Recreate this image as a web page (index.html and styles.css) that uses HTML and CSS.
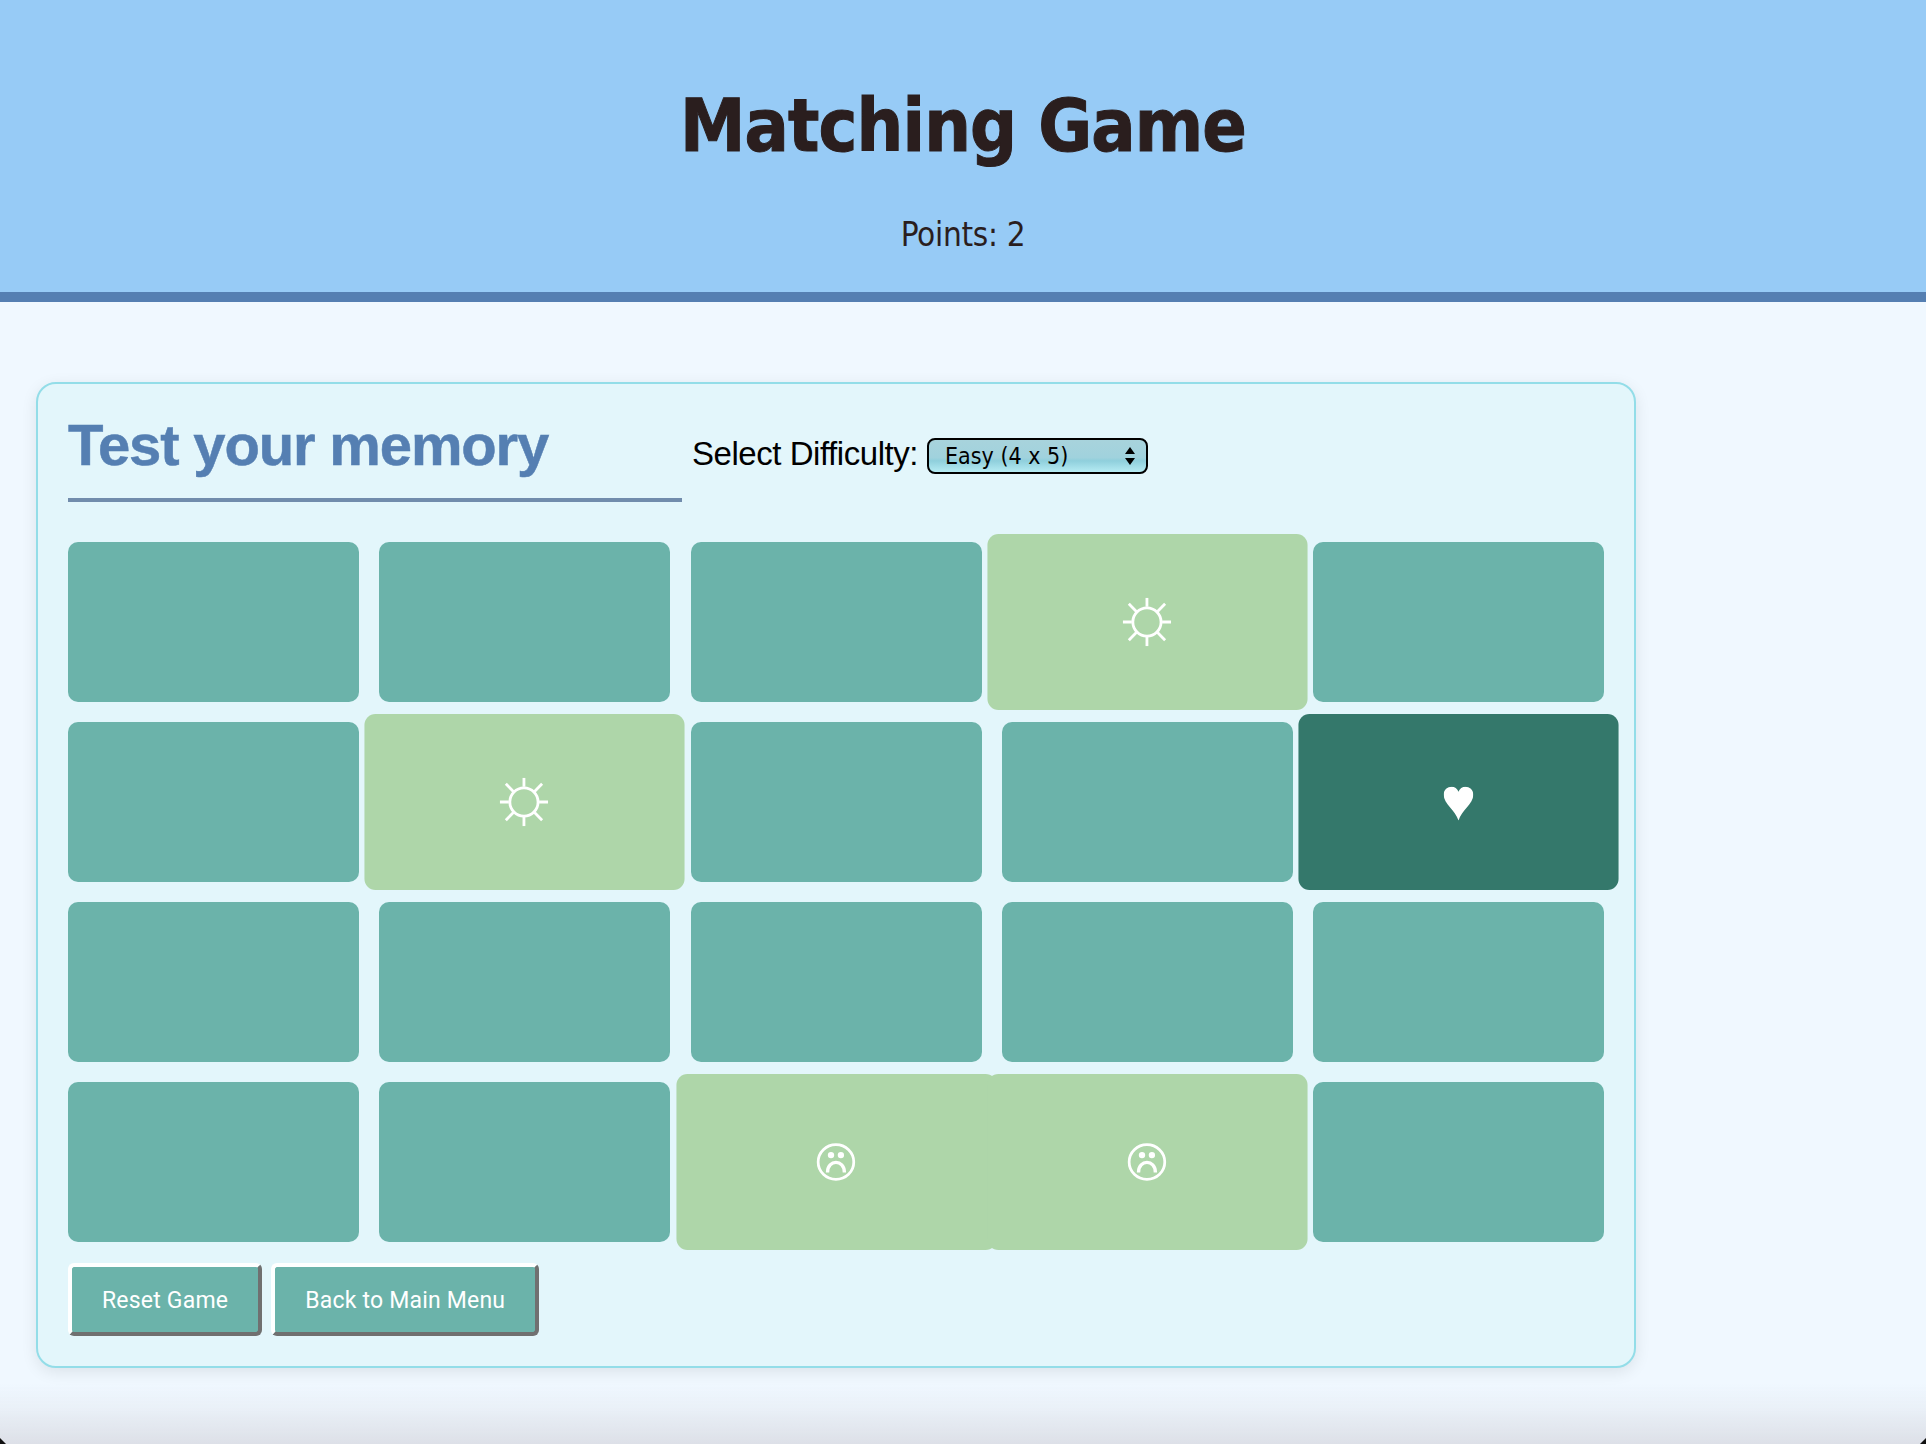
FILE: index.html
```html
<!DOCTYPE html>
<html lang="en">
<head>
    <meta charset="UTF-8">
    <meta name="viewport" content="width=device-width, initial-scale=1.0">
    <title>Matching Game</title>
    <link rel="stylesheet" href="styles.css">
</head>
<body>
    <!-- Header -->
    <header class="site-header">
        <h1>Matching Game</h1>
        <p class="points">Points: 2</p>
    </header>

    <!-- Game Panel -->
    <main class="panel">
        <div class="panel-top">
            <h2>Test your memory</h2>
            <label class="difficulty">
                <span>Select Difficulty:</span>
                <span class="select-wrap">
                    <select>
                        <option>Easy (4 x 5)</option>
                        <option>Medium (4 x 6)</option>
                        <option>Hard (4 x 7)</option>
                    </select>
                    <svg class="select-arrows" width="12" height="20" viewBox="0 0 12 20"><path d="M6 1 L11 8 H1 Z M6 19 L11 12 H1 Z" fill="#000"/></svg>
                </span>
            </label>
        </div>

        <div class="board">
            <div class="card"></div>
            <div class="card"></div>
            <div class="card"></div>
            <div class="card flipped">
                <svg class="sun" width="44" height="44" viewBox="0 0 48 48"><circle cx="24" cy="24" r="14"/><path d="M24 0 V9 M24 39 V48 M0 24 H9 M39 24 H48 M6 6 L13.500 13.500 M34.500 34.500 L42 42 M42 6 L34.500 13.500 M13.500 34.500 L6 42"/></svg>
            </div>
            <div class="card"></div>

            <div class="card"></div>
            <div class="card flipped">
                <svg class="sun" width="44" height="44" viewBox="0 0 48 48"><circle cx="24" cy="24" r="14"/><path d="M24 0 V9 M24 39 V48 M0 24 H9 M39 24 H48 M6 6 L13.500 13.500 M34.500 34.500 L42 42 M42 6 L34.500 13.500 M13.500 34.500 L6 42"/></svg>
            </div>
            <div class="card"></div>
            <div class="card"></div>
            <div class="card active">
                <svg width="27" height="31" viewBox="0 0 30 34"><path d="M15 34 C12 24 0 17 0 8 C0 3 4 0 8 0 C11 0 14 2 15 5 C16 2 19 0 22 0 C26 0 30 3 30 8 C30 17 18 24 15 34 Z" fill="#fff"/></svg>
            </div>

            <div class="card"></div>
            <div class="card"></div>
            <div class="card"></div>
            <div class="card"></div>
            <div class="card"></div>

            <div class="card"></div>
            <div class="card"></div>
            <div class="card flipped">
                <svg class="frown" width="36" height="36" viewBox="0 0 40 40"><ellipse cx="20" cy="20" rx="18" ry="17.500"/><circle class="eye" cx="15" cy="13" r="3.200"/><circle class="eye" cx="25" cy="13" r="3.200"/><path class="mouth" d="M11.500 30.500 C11.500 17 28.500 17 28.500 30.500"/></svg>
            </div>
            <div class="card flipped">
                <svg class="frown" width="36" height="36" viewBox="0 0 40 40"><ellipse cx="20" cy="20" rx="18" ry="17.500"/><circle class="eye" cx="15" cy="13" r="3.200"/><circle class="eye" cx="25" cy="13" r="3.200"/><path class="mouth" d="M11.500 30.500 C11.500 17 28.500 17 28.500 30.500"/></svg>
            </div>
            <div class="card"></div>
        </div>

        <div class="actions">
            <button>Reset Game</button>
            <button>Back to Main Menu</button>
        </div>
    </main>

    <div class="bottom-fade"></div>
    <div class="corner corner-left"></div>
    <div class="corner corner-right"></div>
</body>
</html>
```

FILE: styles.css
```css
html, body {
    height: 100%;
}
body {
    margin: 0;
    padding: 0;
    background-color: #f0f8ff;
    font-family: "Liberation Sans", Arial, sans-serif;
    overflow: hidden;
}
.site-header {
    background-color: #97cbf6;
    border-bottom: 10px solid #557fb2;
    height: 292px;
    text-align: center;
    color: #2a1e1e;
    font-family: "DejaVu Sans Condensed", "DejaVu Sans", sans-serif;
    overflow: hidden;
}
.site-header h1 {
    margin: 86px 0 0;
    font-size: 73px;
    line-height: 80px;
    font-weight: bold;
    letter-spacing: -0.850px;
    -webkit-text-stroke: 1px #2a1e1e;
}
.points {
    margin: 49px 0 0;
    font-size: 33px;
    line-height: 40px;
    letter-spacing: -0.3px;
}
.panel {
    box-sizing: border-box;
    width: 1600px;
    margin: 80px 0 0 36px;
    padding: 30px;
    background-color: #e3f6fb;
    border: 2px solid #93dde8;
    border-radius: 20px;
    box-shadow: 0 4px 16px rgba(0, 0, 0, 0.09);
}
.panel-top {
    display: flex;
    align-items: flex-start;
    gap: 10px;
}
.panel-top h2 {
    box-sizing: border-box;
    width: 614px;
    height: 88px;
    margin: 0;
    color: #557fb2;
    font-size: 58px;
    line-height: 62px;
    font-weight: bold;
    letter-spacing: -1.150px;
    -webkit-text-stroke: 0.5px #557fb2;
    border-bottom: 4px solid #718cac;
}
.difficulty {
    display: flex;
    align-items: center;
    gap: 9px;
    margin-top: 20px;
    font-size: 33px;
    letter-spacing: -0.450px;
    color: #000;
}
.select-wrap {
    display: block;
    position: relative;
    margin-top: 4px;
}
.select-wrap select {
    display: block;
    width: 221px;
    height: 36px;
    padding: 0 0 0 16px;
    appearance: none;
    border: 2px solid #000;
    border-radius: 8px;
    font-family: "DejaVu Sans Condensed", "DejaVu Sans", sans-serif;
    font-size: 23px;
    color: #000;
    background: linear-gradient(#a8d3dc 0%, #a0d2dd 55%, #8fcfdc 65%, #b6ebf3 100%);
}
.select-arrows {
    position: absolute;
    right: 12px;
    top: 8px;
}
.board {
    display: grid;
    grid-template-columns: repeat(5, 291px);
    grid-auto-rows: 160px;
    gap: 20px 20.250px;
    margin-top: 40px;
}
.card {
    display: flex;
    align-items: center;
    justify-content: center;
    background-color: #6bb3aa;
    border-radius: 10px;
}
.card.flipped {
    background-color: #aed6a9;
    transform: scale(1.1);
}
.card.active {
    background-color: #34786b;
    transform: scale(1.1);
}
.card svg {
    fill: none;
    stroke: #fff;
    margin-right: 2px;
}
.card.active svg {
    stroke: none;
    margin: 2px 0 0;
}
.sun {
    stroke-width: 2.800;
}
.frown {
    stroke-width: 2.800;
}
.frown .eye {
    fill: #fff;
    stroke: none;
}
.frown .mouth {
    stroke-width: 3.400;
}
.actions {
    display: flex;
    gap: 9px;
    margin-top: 21px;
}
.actions button {
    height: 73px;
    padding: 2px 30px 0;
    background-color: #6bb3aa;
    color: #fff;
    font-family: Roboto, sans-serif;
    font-size: 23px;
    letter-spacing: 0.2px;
    border-width: 4px;
    border-style: solid;
    border-color: #fff #707070 #707070 #fff;
    border-radius: 6px;
}
.bottom-fade {
    position: fixed;
    left: 0;
    right: 0;
    bottom: 0;
    height: 60px;
    background: linear-gradient(rgba(220, 223, 231, 0), rgba(220, 223, 231, 0.35) 45%, #dcdfe7);
    pointer-events: none;
}
.corner {
    position: fixed;
    bottom: 0;
    width: 0;
    height: 0;
    border-bottom: 6px solid #111;
}
.corner-left {
    left: 0;
    border-right: 6px solid transparent;
}
.corner-right {
    right: 0;
    border-left: 6px solid transparent;
}
```
